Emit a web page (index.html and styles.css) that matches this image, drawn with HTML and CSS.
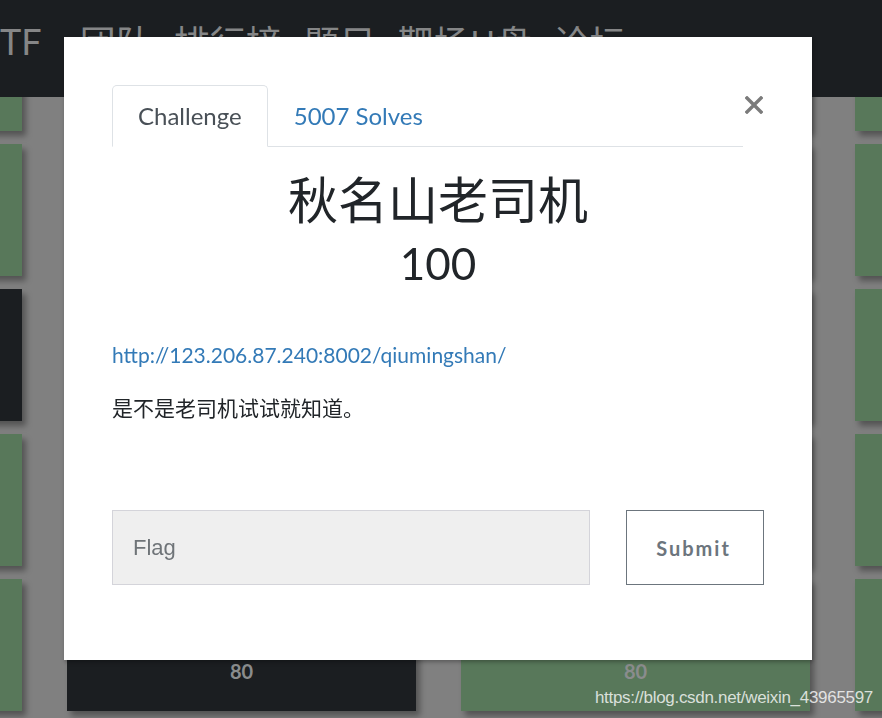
FILE: index.html
```html
<!DOCTYPE html>
<html lang="zh">
<head>
<meta charset="utf-8">
<title>Challenge</title>
<link rel="stylesheet" href="styles.css">
</head>
<body>
<nav class="navbar">
  <span class="brand">TF</span>
  <a class="nav-item">团队</a>
  <a class="nav-item">排行榜</a>
  <a class="nav-item">题目</a>
  <a class="nav-item">靶场U盘</a>
  <a class="nav-item">论坛</a>
</nav>

<main class="board">
  <div class="card green"></div><div class="card green"></div><div class="card green"></div><div class="card green"></div>
  <div class="card green"></div><div class="card green"></div><div class="card green"></div><div class="card green"></div>
  <div class="card dark"></div><div class="card green"></div><div class="card green"></div><div class="card green"></div>
  <div class="card green"></div><div class="card green"></div><div class="card green"></div><div class="card green"></div>
  <div class="card green"></div>
  <div class="card dark"><span class="pts">80</span></div>
  <div class="card green"><span class="pts">80</span></div>
  <div class="card green"></div>
</main>

<section class="modal">
  <div class="modal-head">
    <ul class="tabs">
      <li class="tab active">Challenge</li>
      <li class="tab link">5007 Solves</li>
    </ul>
    <button class="close" aria-label="Close">
      <svg width="18" height="18" viewBox="0 0 18 18"><path d="M2 2 L16 16 M16 2 L2 16" stroke="#7b7b7b" stroke-width="3.4" stroke-linecap="square" fill="none"/></svg>
    </button>
  </div>
  <h2 class="chal-name">秋名山老司机</h2>
  <h3 class="chal-value">100</h3>
  <p class="chal-link"><a>http://123.206.87.240:8002/qiumingshan/</a></p>
  <p class="chal-desc">是不是老司机试试就知道。</p>
  <form class="flag-row">
    <input class="flag-input" type="text" placeholder="Flag">
    <button class="submit" type="button">Submit</button>
  </form>
</section>

<div class="watermark">https://blog.csdn.net/weixin_43965597</div>
</body>
</html>
```

FILE: styles.css
```css
html, body {
  margin: 0;
  padding: 0;
  width: 882px;
  height: 718px;
  overflow: hidden;
  background: #808080;
  font-family: Lato, "Noto Sans CJK SC", sans-serif;
}

.navbar {
  position: fixed;
  top: 0;
  left: 0;
  right: 0;
  height: 97px;
  background: #1b1e21;
  z-index: 2;
  display: flex;
  align-items: flex-start;
  padding-top: 19px;
  box-sizing: border-box;
  font-family: "Noto Sans CJK SC", sans-serif;
  font-size: 36px;
  line-height: 44px;
  color: #858687;
}
.brand {
  font-family: Lato, sans-serif;
  margin-right: 38px;
}
.nav-item {
  margin-right: 22px;
}

.board {
  display: grid;
  grid-template-columns: repeat(4, 349px);
  grid-auto-rows: 132px;
  column-gap: 45px;
  row-gap: 13px;
  margin-left: -327px;
  margin-top: -1px;
}
.card {
  box-shadow: 4px 5px 6px rgba(0, 0, 0, 0.35);
  display: flex;
  flex-direction: column;
  justify-content: flex-end;
  align-items: center;
  padding-bottom: 28px;
  box-sizing: border-box;
}
.card.green { background: #58785a; }
.card.dark { background: #1b1e21; }
.pts {
  font-family: Lato, sans-serif;
  font-weight: 700;
  font-size: 20px;
  line-height: 24px;
  color: #8a8c8d;
}

.modal {
  position: absolute;
  left: 64px;
  top: 37px;
  width: 748px;
  height: 623px;
  box-sizing: border-box;
  padding: 48px 48px 75px;
  background: #fff;
  z-index: 3;
  display: flex;
  flex-direction: column;
  box-shadow: 1px 2px 4px rgba(0, 0, 0, 0.3);
}
.modal-head {
  display: flex;
  align-items: flex-start;
}
.tabs {
  flex: 1;
  display: flex;
  list-style: none;
  margin: 0;
  padding: 0;
  border-bottom: 1px solid #dee2e6;
  height: 62px;
  box-sizing: border-box;
}
.tab {
  font-size: 24px;
  line-height: 28px;
  padding: 16px 25px;
  height: 62px;
  box-sizing: border-box;
  border: 1px solid transparent;
  border-radius: 5px 5px 0 0;
}
.tab.active {
  color: #495057;
  border-color: #dee2e6 #dee2e6 #fff;
  background: #fff;
}
.tab.link {
  color: #337ab7;
}
.close {
  border: 0;
  background: none;
  padding: 11px 1px 0 2px;
  margin: 0;
  width: 21px;
  line-height: 0;
}

.chal-name {
  margin: 20px 0 0;
  text-align: center;
  font-family: "Noto Sans CJK SC", sans-serif;
  font-weight: 400;
  font-size: 50px;
  line-height: 60px;
  color: #212529;
}
.chal-value {
  margin: 10px 0 0;
  text-align: center;
  font-family: Lato, sans-serif;
  font-weight: 400;
  font-size: 44px;
  line-height: 52px;
  color: #212529;
}
.chal-link {
  margin: 52px 0 0;
  font-size: 21px;
  line-height: 28px;
}
.chal-link a {
  color: #337ab7;
}
.chal-desc {
  margin: 25px 0 0;
  font-family: Lato, "Noto Sans CJK SC", sans-serif;
  font-size: 21px;
  line-height: 28px;
  color: #212529;
}

.flag-row {
  margin-top: auto;
  display: flex;
  gap: 36px;
}
.flag-input {
  flex: 1;
  min-width: 0;
  height: 75px;
  box-sizing: border-box;
  background: #efefef;
  border: 1px solid #d4d4da;
  padding: 0 20px;
  font-family: "Liberation Sans", sans-serif;
  font-size: 22px;
  color: #333;
  outline: none;
}
.flag-input::placeholder {
  color: #6f7478;
}
.submit {
  width: 138px;
  height: 75px;
  box-sizing: border-box;
  background: #fff;
  border: 1px solid #6c757d;
  font-family: Lato, sans-serif;
  font-weight: 700;
  font-size: 20px;
  letter-spacing: 2px;
  padding-left: 3px;
  color: #6c757d;
}

.watermark {
  position: absolute;
  right: 9px;
  bottom: 10px;
  z-index: 4;
  font-family: "Liberation Sans", sans-serif;
  font-size: 17px;
  letter-spacing: -0.3px;
  color: rgba(255, 255, 255, 0.78);
}
```
